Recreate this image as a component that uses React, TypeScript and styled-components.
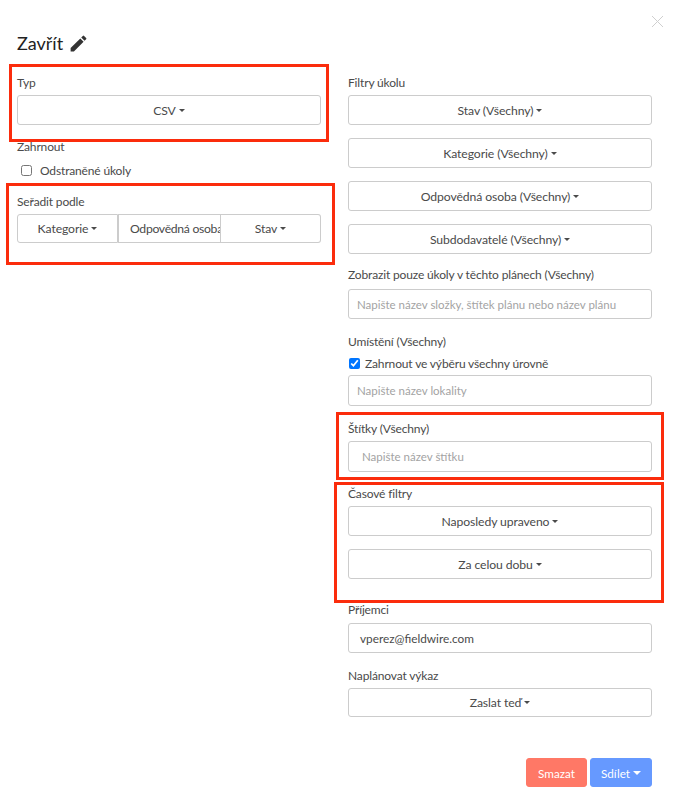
import React from "react";
import styled, { createGlobalStyle } from "styled-components";
import { MdEdit } from "react-icons/md";

const Global = createGlobalStyle`
  html, body { margin: 0; padding: 0; background: #fff; }
  body { font-family: Lato, "Liberation Sans", sans-serif; color: #4a4a4a; font-size: 12px; }
`;

const Modal = styled.div`
  position: relative;
  width: 674px;
  height: 805px;
  box-sizing: border-box;
  padding: 32px 22px 0 17px;
  overflow: hidden;
`;

const Close = styled.button`
  position: absolute;
  top: 15px;
  right: 10px;
  width: 13px;
  height: 13px;
  padding: 0;
  border: 0;
  background: none;
  display: block;
  line-height: 0;
`;

const Title = styled.h4`
  margin: 0;
  height: 22px;
  display: flex;
  align-items: center;
  gap: 5px;
  font-size: 18px;
  font-weight: 400;
  color: #222;
  line-height: 22px;
`;

const Columns = styled.div`
  display: grid;
  grid-template-columns: 304px 304px;
  column-gap: 27px;
  margin-top: 21px;
`;

const Column = styled.div`
  display: flex;
  flex-direction: column;
`;

const Label = styled.div<{ $top?: number; $gap?: number }>`
  height: 16px;
  line-height: 16px;
  margin-top: ${(p) => p.$top ?? 0}px;
  margin-bottom: ${(p) => p.$gap ?? 4}px;
  font-size: 12px;
  letter-spacing: -0.15px;
  color: #4a4a4a;
  white-space: nowrap;
`;

const Button = styled.button<{ $top?: number }>`
  display: flex;
  align-items: center;
  justify-content: center;
  width: 100%;
  height: 30px;
  margin-top: ${(p) => p.$top ?? 0}px;
  flex: none;
  box-sizing: border-box;
  border: 1px solid #ccc;
  border-radius: 3px;
  background: #fff;
  color: #4a4a4a;
  font: 400 12.2px Lato, "Liberation Sans", sans-serif;
  letter-spacing: -0.1px;
  padding: 0 6px;
  white-space: nowrap;
  overflow: hidden;
`;

const ShortButton = styled(Button)`
  height: 29px;
`;

const Caret = styled.span<{ $color?: string; $size?: number }>`
  display: inline-block;
  flex: none;
  width: 0;
  height: 0;
  margin-left: 3px;
  border-left: ${(p) => p.$size ?? 3}px solid transparent;
  border-right: ${(p) => p.$size ?? 3}px solid transparent;
  border-top: ${(p) => p.$size ?? 3}px solid ${(p) => p.$color ?? "#4a4a4a"};
`;

const Group = styled.div`
  display: grid;
  grid-template-columns: 101px 103px 100px;
  height: 29px;
`;

const GroupButton = styled(Button)<{ $pos: "first" | "mid" | "last" }>`
  height: 29px;
  border-radius: ${(p) => (p.$pos === "first" ? "3px 0 0 3px" : p.$pos === "last" ? "0 3px 3px 0" : "0")};
  border-left-width: ${(p) => (p.$pos === "first" ? 1 : 0)}px;
  justify-content: ${(p) => (p.$pos === "mid" ? "flex-start" : "center")};
  padding: ${(p) => (p.$pos === "mid" ? "0 0 0 11px" : "0 6px")};
  ${(p) => (p.$pos === "mid" ? "border-left: 1px solid #ccc; border-right: 1px solid #ccc; letter-spacing: -0.3px;" : "")}
`;

const CheckRow = styled.label<{ $indent: number; $top: number; $gap: number }>`
  display: flex;
  align-items: center;
  gap: ${(p) => p.$gap}px;
  height: 16px;
  margin-top: ${(p) => p.$top}px;
  padding-left: ${(p) => p.$indent}px;
  font-size: 12px;
  letter-spacing: -0.15px;
  color: #4a4a4a;
`;

const Check = styled.input.attrs({ type: "checkbox" })`
  width: 11px;
  height: 11px;
  margin: 0;
  accent-color: #0075ff;
`;

const Field = styled.div<{ $top?: number; $pad?: number; $h?: number }>`
  height: ${(p) => p.$h ?? 30}px;
  margin-top: ${(p) => p.$top ?? 0}px;
  flex: none;
  box-sizing: border-box;
  border: 1px solid #ccc;
  border-radius: 3px;
  display: flex;
  align-items: center;
  padding-left: ${(p) => p.$pad ?? 8}px;
  font-size: 11.8px;
  color: #4a4a4a;
`;

const Placeholder = styled.span`
  color: #a3a3a3;
  font-size: 11.5px;
`;

const Footer = styled.div`
  display: flex;
  justify-content: flex-end;
  gap: 3px;
  margin-top: 41px;
`;

const ActionButton = styled.button<{ $bg: string; $w: number }>`
  width: ${(p) => p.$w}px;
  height: 29px;
  display: flex;
  align-items: center;
  justify-content: center;
  border: 1px solid ${(p) => p.$bg};
  border-radius: 3px;
  background: ${(p) => p.$bg};
  color: #fff;
  font: 400 11.7px Lato, "Liberation Sans", sans-serif;
  padding: 0;
`;

const Highlight = styled.div<{ $x: number; $y: number; $w: number; $h: number }>`
  position: absolute;
  left: ${(p) => p.$x}px;
  top: ${(p) => p.$y}px;
  width: ${(p) => p.$w}px;
  height: ${(p) => p.$h}px;
  box-sizing: border-box;
  border: 3px solid #fb2c0c;
  pointer-events: none;
`;

function Drop({ children, top, short }: { children: React.ReactNode; top?: number; short?: boolean }) {
  const Comp = short ? ShortButton : Button;
  return (
    <Comp $top={top}>
      {children}
      <Caret />
    </Comp>
  );
}

export default function App() {
  return (
    <>
      <Global />
      <Modal>
        <Close aria-label="Zavřít">
          <svg width="13" height="13" viewBox="0 0 13 13">
            <path d="M1 1 L12 12 M12 1 L1 12" stroke="#cfcfcf" strokeWidth="1" fill="none" />
          </svg>
        </Close>
        <Title>
          Zavřít <MdEdit size={21} color="#333" />
        </Title>
        <Columns>
          <Column>
            <Label>Typ</Label>
            <Drop>CSV</Drop>
            <Label $top={14}>Zahrnout</Label>
            <CheckRow $indent={4} $top={3} $gap={8}>
              <Check />
              Odstraněné úkoly
            </CheckRow>
            <Label $top={16}>Seřadit podle</Label>
            <Group>
              <GroupButton $pos="first">
                Kategorie
                <Caret />
              </GroupButton>
              <GroupButton $pos="mid">Odpovědná osoba</GroupButton>
              <GroupButton $pos="last">
                Stav
                <Caret />
              </GroupButton>
            </Group>
          </Column>
          <Column>
            <Label>Filtry úkolu</Label>
            <Drop>Stav (Všechny)</Drop>
            <Drop top={13}>Kategorie (Všechny)</Drop>
            <Drop top={13}>Odpovědná osoba (Všechny)</Drop>
            <Drop top={13}>Subdodavatelé (Všechny)</Drop>
            <Label $top={13} $gap={6}>Zobrazit pouze úkoly v těchto plánech (Všechny)</Label>
            <Field>
              <Placeholder>Napište název složky, štítek plánu nebo název plánu</Placeholder>
            </Field>
            <Label $top={15}>Umístění (Všechny)</Label>
            <CheckRow $indent={1} $top={1} $gap={5}>
              <Check defaultChecked />
              Zahrnout ve výběru všechny úrovně
            </CheckRow>
            <Field $top={4} $h={31}>
              <Placeholder>Napište název lokality</Placeholder>
            </Field>
            <Label $top={15}>Štítky (Všechny)</Label>
            <Field $pad={13} $h={31}>
              <Placeholder>Napište název štítku</Placeholder>
            </Field>
            <Label $top={14}>Časové filtry</Label>
            <Drop>Naposledy upraveno</Drop>
            <Drop top={13}>Za celou dobu</Drop>
            <Label $top={23} $gap={5}>Příjemci</Label>
            <Field $pad={11}>vperez@fieldwire.com</Field>
            <Label $top={15}>Naplánovat výkaz</Label>
            <Drop short>Zaslat teď</Drop>
            <Footer>
              <ActionButton $bg="#ff7866" $w={61}>Smazat</ActionButton>
              <ActionButton $bg="#6699ff" $w={62}>
                Sdílet
                <Caret $color="#fff" $size={4} />
              </ActionButton>
            </Footer>
          </Column>
        </Columns>
        <Highlight $x={9} $y={64} $w={320} $h={78} />
        <Highlight $x={6} $y={183} $w={329} $h={82} />
        <Highlight $x={336} $y={412} $w={328} $h={68} />
        <Highlight $x={334} $y={482} $w={330} $h={121} />
      </Modal>
    </>
  );
}
